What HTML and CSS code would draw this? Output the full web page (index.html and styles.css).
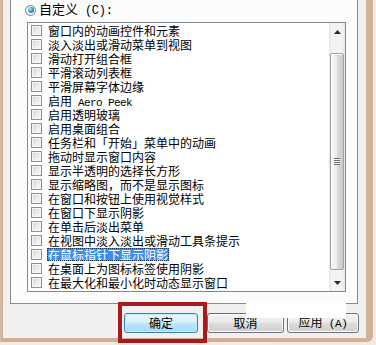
FILE: index.html
```html
<!DOCTYPE html>
<html lang="zh-CN">
<head>
<meta charset="utf-8">
<title>性能选项</title>
<link rel="stylesheet" href="styles.css">
</head>
<body>
<div class="frame">
  <div class="dialog">
    <div class="tabpage">
      <div class="radio-row">
        <span class="radio"><span class="dot"></span></span>
        <span class="radio-label">自定义<span class="mono-paren"> (<u>C</u>):</span></span>
      </div>
      <div class="listbox">
        <ul class="items">
          <li class="item"><span class="check"></span><span class="label">窗口内的动画控件和元素</span></li>
          <li class="item"><span class="check"></span><span class="label">淡入淡出或滑动菜单到视图</span></li>
          <li class="item"><span class="check"></span><span class="label">滑动打开组合框</span></li>
          <li class="item"><span class="check"></span><span class="label">平滑滚动列表框</span></li>
          <li class="item"><span class="check"></span><span class="label">平滑屏幕字体边缘</span></li>
          <li class="item"><span class="check"></span><span class="label">启用<span class="mono"> Aero Peek</span></span></li>
          <li class="item"><span class="check"></span><span class="label">启用透明玻璃</span></li>
          <li class="item"><span class="check"></span><span class="label">启用桌面组合</span></li>
          <li class="item"><span class="check"></span><span class="label">任务栏和「开始」菜单中的动画</span></li>
          <li class="item"><span class="check"></span><span class="label">拖动时显示窗口内容</span></li>
          <li class="item"><span class="check"></span><span class="label">显示半透明的选择长方形</span></li>
          <li class="item"><span class="check"></span><span class="label">显示缩略图，而不是显示图标</span></li>
          <li class="item"><span class="check"></span><span class="label">在窗口和按钮上使用视觉样式</span></li>
          <li class="item"><span class="check"></span><span class="label">在窗口下显示阴影</span></li>
          <li class="item"><span class="check"></span><span class="label">在单击后淡出菜单</span></li>
          <li class="item"><span class="check"></span><span class="label">在视图中淡入淡出或滑动工具条提示</span></li>
          <li class="item"><span class="check"></span><span class="label selected">在鼠标指针下显示阴影</span></li>
          <li class="item"><span class="check"></span><span class="label">在桌面上为图标标签使用阴影</span></li>
          <li class="item"><span class="check"></span><span class="label">在最大化和最小化时动态显示窗口</span></li>
        </ul>
        <div class="scrollbar">
          <div class="sb-btn"><svg width="7" height="4" viewBox="0 0 7 4"><path d="M3.5 0 L7 4 L0 4 Z" fill="#2a2a2a"/></svg></div>
          <div class="sb-track">
            <div class="thumb"><span class="grip"></span></div>
          </div>
          <div class="sb-btn"><svg width="7" height="4" viewBox="0 0 7 4"><path d="M0 0 L7 0 L3.5 4 Z" fill="#2a2a2a"/></svg></div>
        </div>
      </div>
    </div>
    <div class="buttons">
      <button class="btn btn-default">确定</button>
      <button class="btn btn-cancel">取消</button>
      <button class="btn btn-apply">应用<span class="mono-paren"> (<u>A</u>)</span></button>
    </div>
  </div>
</div>
<div class="watermark"></div>
<div class="highlight-box"></div>
</body>
</html>
```
FILE: styles.css
```css
html, body {
  margin: 0;
  padding: 0;
}
body {
  width: 376px;
  height: 345px;
  overflow: hidden;
  background: #efebe7;
  font-family: "Noto Sans CJK SC", "Noto Sans", sans-serif;
  font-size: 12px;
  color: #000;
  position: relative;
}
.frame {
  width: 373px;
  height: 342px;
  box-sizing: border-box;
  padding: 0 7px 4px 3px;
  background: linear-gradient(to right, #d8b9a2 0, #cfae95 3px, #d2b198 100%);
  border-bottom-right-radius: 6px;
}
.dialog {
  height: 100%;
  background: #f0f0f0;
  padding-left: 7px;
  display: flex;
  flex-direction: column;
  box-sizing: border-box;
}
.tabpage {
  width: 348px;
  height: 304px;
  box-sizing: border-box;
  background: #fcfcfc;
  border: 1px solid #898c95;
  border-top: none;
  display: flex;
  flex-direction: column;
}
.radio-row {
  height: 20px;
  display: flex;
  align-items: center;
  padding-left: 14px;
  gap: 3px;
}
.radio {
  width: 11px;
  height: 11px;
  box-sizing: border-box;
  border: 1px solid #7f8285;
  border-radius: 50%;
  background: radial-gradient(circle, #ffffff 40%, #d8d8d8 100%);
  display: flex;
  align-items: center;
  justify-content: center;
}
.dot {
  width: 6px;
  height: 6px;
  border-radius: 50%;
  background: radial-gradient(circle at 35% 35%, #b6ecff 0, #3a9be0 45%, #0c4f93 100%);
}
.radio-label {
  font-size: 13px;
  line-height: 14px;
}
.mono-paren {
  font-family: "Liberation Mono", monospace;
  font-size: 12px;
  letter-spacing: -0.3px;
}
.radio-label u, .btn u {
  text-decoration: none;
}
.listbox {
  margin-top: 2px;
  margin-left: 16px;
  width: 319px;
  height: 270px;
  box-sizing: border-box;
  border: 1px solid #828790;
  background: #fff;
  display: flex;
}
.items {
  list-style: none;
  margin: 0;
  padding: 0 0 0 3px;
  flex: 1;
}
.item {
  height: 14px;
  display: flex;
  align-items: center;
}
.check {
  width: 11px;
  height: 11px;
  box-sizing: border-box;
  border: 1px solid #8f8f8f;
  background: linear-gradient(135deg, #cfd1d4 0%, #eeeeee 60%, #f8f8f8 100%);
  box-shadow: inset 0 0 0 1px #f6f6f6;
  margin-right: 5px;
  flex: none;
}
.label {
  line-height: 13px;
  height: 13px;
  padding: 0 1px;
  white-space: nowrap;
}
.mono {
  font-family: "Liberation Mono", monospace;
  font-size: 11px;
  letter-spacing: -0.6px;
}
.selected {
  background: #3b8ee8;
  color: #fff;
  outline: 1px dotted #0d3567;
  outline-offset: -1px;
}
.scrollbar {
  width: 16px;
  display: flex;
  flex-direction: column;
  background: linear-gradient(to right, #e6e6e6 0, #f4f4f4 3px, #f4f4f4 12px, #e9e9e9 16px);
}
.sb-btn {
  height: 17px;
  display: flex;
  align-items: center;
  justify-content: center;
}
.sb-track {
  flex: 1;
  display: flex;
  flex-direction: column;
  padding: 13px 1px 4px 1px;
}
.thumb {
  flex: 1;
  border: 1px solid #a0a0a4;
  border-radius: 2px;
  background: linear-gradient(to right, #f7f7f7 0%, #ececec 45%, #dadadc 55%, #c9c9cd 100%);
  box-shadow: inset 1px 1px 0 #fff;
  display: flex;
  align-items: center;
  justify-content: center;
}
.grip {
  width: 6px;
  height: 7px;
  background: repeating-linear-gradient(to bottom, #6e6e6e 0, #6e6e6e 1px, #f4f4f4 1px, #f4f4f4 2px);
}
.buttons {
  margin-top: 9px;
  display: flex;
  justify-content: flex-end;
  padding-right: 7px;
}
.btn {
  height: 20px;
  box-sizing: border-box;
  padding: 0;
  font-family: "Noto Sans CJK SC", "Noto Sans", sans-serif;
  font-size: 12px;
  line-height: 16px;
  color: #000;
  border-radius: 3px;
  border: 1px solid #707070;
  background: linear-gradient(to bottom, #f2f2f2 0%, #ebebeb 45%, #dddddd 50%, #cfcfcf 100%);
  box-shadow: inset 0 0 0 1px #fbfbfb;
}
.btn .mono-paren {
  font-size: 11px;
}
.btn-default {
  width: 74px;
  border-color: #3c7fb1;
  background: linear-gradient(to bottom, #eaf6fd 0%, #d9f0fc 45%, #bee6fd 50%, #a7d9f5 100%);
  box-shadow: inset 0 0 0 1px #c5ecff;
}
.btn-cancel {
  width: 77px;
  margin-left: 9px;
}
.btn-apply {
  width: 72px;
  margin-left: 3px;
}
.highlight-box {
  position: absolute;
  left: 118px;
  top: 302px;
  width: 89px;
  height: 41px;
  box-sizing: border-box;
  border: 4px solid #a81a1d;
}
.watermark {
  position: absolute;
  left: 246px;
  top: 302px;
  width: 100px;
  height: 16px;
  background: #fff;
}
```
